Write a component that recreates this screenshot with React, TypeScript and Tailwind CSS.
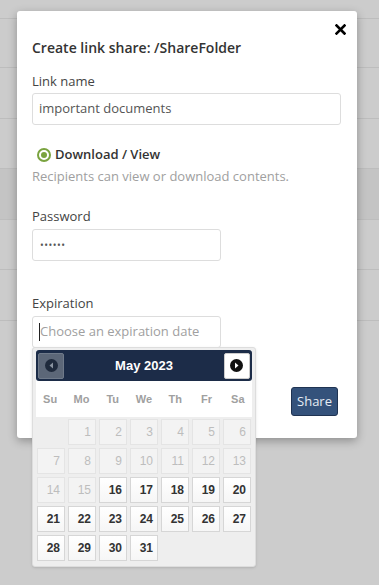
import React from 'react'

const rows = [
  { h: 'h-[49px]', dark: false },
  { h: 'h-[51px]', dark: false },
  { h: 'h-[50px]', dark: false },
  { h: 'h-[51px]', dark: true },
  { h: 'h-[50px]', dark: false },
  { h: 'h-[51px]', dark: false },
]

const weekdays = ['Su', 'Mo', 'Tu', 'We', 'Th', 'Fr', 'Sa']

// May 2023 starts on a Monday; days before the 16th are disabled
const cells: (number | null)[] = [null, ...Array.from({ length: 31 }, (_, i) => i + 1)]

const DayCell = ({ day }: { day: number | null }) => {
  if (day === null) return <div className="h-[26px]" />
  const disabled = day < 16
  return (
    <div
      className={
        disabled
          ? 'h-[26px] border border-[#e4e4e4] bg-[#f3f3f3] text-right pr-[4px] text-[12px] leading-[24px] text-[#bdbdbd]'
          : 'h-[26px] border border-[#d6d6d6] bg-gradient-to-b from-white to-[#f6f6f6] text-right pr-[4px] text-[12px] leading-[24px] font-bold text-[#333]'
      }
    >
      {day}
    </div>
  )
}

const DatePicker = () => (
  <div
    className="absolute left-[32px] top-[347px] w-[224px] h-[220px] bg-[#eeeeee] border border-[#dddddd] rounded-[3px] px-[3px] pt-[2px] shadow-sm"
    style={{ fontFamily: '"Liberation Sans", Arial, sans-serif' }}
  >
    <div className="bg-white">
      <div className="h-[31px] bg-[#1c2c48] rounded-[3px] flex items-center justify-between px-[2px]">
        <button className="w-[26px] h-[26px] bg-[#5c6778] border border-[#6f7a8a] rounded-[2px] flex items-center justify-center">
          <svg width="13" height="13" viewBox="0 0 13 13">
            <circle cx="6.5" cy="6.5" r="6.5" fill="#1f2a3c" />
            <path d="M8 3.5 L4.5 6.5 L8 9.5 Z" fill="#8a93a0" />
          </svg>
        </button>
        <span className="text-white font-bold text-[13px]">May 2023</span>
        <button className="w-[26px] h-[26px] bg-white border border-[#cccccc] rounded-[2px] flex items-center justify-center">
          <svg width="13" height="13" viewBox="0 0 13 13">
            <circle cx="6.5" cy="6.5" r="6.5" fill="#111111" />
            <path d="M5 3.5 L8.5 6.5 L5 9.5 Z" fill="#ffffff" />
          </svg>
        </button>
      </div>
      <div className="grid grid-cols-7 gap-[3px] h-[36px] items-center">
        {weekdays.map((d) => (
          <div key={d} className="text-center text-[11px] font-bold text-[#a0a0a0]">
            {d}
          </div>
        ))}
      </div>
    </div>
    <div className="grid grid-cols-7 gap-x-[3px] gap-y-[3px] mt-[2px] px-[1px]">
      {cells.map((d, i) => (
        <DayCell key={i} day={d} />
      ))}
    </div>
  </div>
)

const App = () => {
  return (
    <div className="relative w-[379px] h-[585px] bg-[#cccccc] overflow-hidden" style={{ fontFamily: '"Open Sans", sans-serif' }}>
      {/* table rows behind the overlay */}
      <div className="h-[19px] border-b border-[#bdbdbd]" />
      {rows.map((r, i) => (
        <div key={i} className={`${r.h} border-b border-[#bdbdbd] ${r.dark ? 'bg-[#c4c4c4]' : ''}`} />
      ))}

      <div className="absolute left-[17px] top-[11px] w-[340px] h-[427px] bg-white rounded-[3px] shadow-[0_3px_10px_rgba(0,0,0,0.3)] pt-[27px] pl-[15px] pr-[16px]">
        <button className="absolute right-[11px] top-[12px] w-[12px] h-[12px] flex items-center justify-center">
          <svg width="11" height="11" viewBox="0 0 11 11">
            <path d="M1.5 1.5 L9.5 9.5 M9.5 1.5 L1.5 9.5" stroke="#000" strokeWidth="2.6" strokeLinecap="square" />
          </svg>
        </button>
        <h2 className="text-[14px] leading-[20px] font-semibold text-[#333]">Create link share: /ShareFolder</h2>

        <div className="mt-[14px] text-[13px] leading-[18px] text-[#444]">Link name</div>
        <div className="mt-[3px] h-[32px] border border-[#dddddd] rounded-[3px] px-[6px] flex items-center text-[13px] text-[#555]">
          important documents
        </div>

        <div className="mt-[21px] flex items-center h-[18px] pl-[5px]">
          <span className="w-[14px] h-[14px] rounded-full border-2 border-[#7aa33f] flex items-center justify-center">
            <span className="w-[6px] h-[6px] rounded-full bg-[#7aa33f]" />
          </span>
          <span className="ml-[4px] text-[13px] font-semibold text-[#333]">Download / View</span>
        </div>
        <div className="mt-[3px] text-[13px] leading-[18px] text-[#a0a0a0]">Recipients can view or download contents.</div>

        <div className="mt-[22px] text-[13px] leading-[18px] text-[#444]">Password</div>
        <div className="mt-[4px] w-[189px] h-[32px] border border-[#dddddd] rounded-[3px] px-[7px] flex items-center text-[10px] tracking-[0.5px] text-[#555]">
          ••••••
        </div>

        <div className="mt-[33px] text-[13px] leading-[18px] text-[#444]">Expiration</div>
        <div className="mt-[4px] w-[189px] h-[32px] border border-[#dddddd] rounded-[3px] px-[6px] flex items-center text-[13px] text-[#a0a0a0]">
          <span className="w-[1px] h-[18px] bg-[#222]" />
          Choose an expiration date
        </div>

        <div className="mt-[39px] flex justify-end pr-[3px]">
          <button className="w-[47px] h-[29px] bg-[#34527b] border border-[#1f3352] rounded-[3px] text-[13px] text-[#e6ecf3]">
            Share
          </button>
        </div>
      </div>

      <DatePicker />
    </div>
  )
}

export default App
